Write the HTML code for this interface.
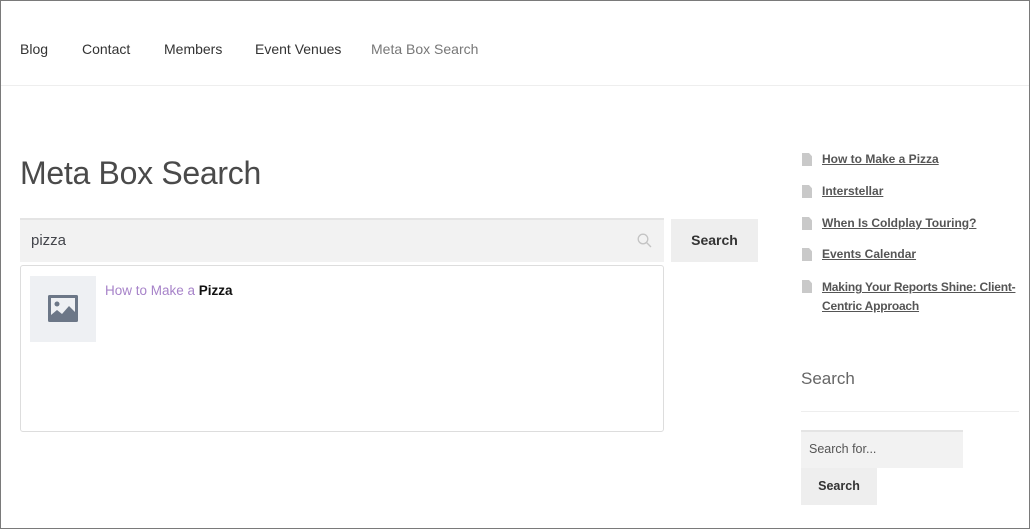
<!DOCTYPE html>
<html><head><meta charset="utf-8"><style>
*{margin:0;padding:0;box-sizing:border-box}
body{width:1030px;height:529px;overflow:hidden;background:#fff;font-family:"Liberation Sans",sans-serif;color:#43454b;position:relative}
.frame{position:absolute;left:0;top:0;width:1030px;height:529px;border:1px solid #7a7a7a;pointer-events:none}
.nav{position:absolute;top:41px;left:20px;font-size:14px;color:#333}
.nav span{position:absolute;white-space:nowrap}
.hr{position:absolute;left:1px;right:1px;top:85px;height:1px;background:#eee}
h1{position:absolute;left:20px;top:155px;font-weight:normal;font-size:32px;color:#4a4a4a;letter-spacing:-0.3px;white-space:nowrap}
.input{position:absolute;left:20px;top:218px;width:644px;height:44px;background:#f2f2f2;border-top:2px solid #e4e4e4}
.input .t{position:absolute;left:11px;top:12px;font-size:15px;color:#43454b}
.btn{position:absolute;background:#eeeeee;font-weight:bold;color:#333;text-align:center}
.res{position:absolute;left:20px;top:265px;width:644px;height:167px;border:1px solid #ddd;border-radius:3px}
.thumb{position:absolute;left:9px;top:10px;width:66px;height:66px;background:#eef0f3}
.res .l{position:absolute;left:84px;top:17px;font-size:13.5px;color:#a783c9;white-space:nowrap}
.res .l b{color:#111}
.side{position:absolute;left:802px;font-size:12px;font-weight:bold;color:#555;white-space:nowrap}
.side i{position:absolute;left:0;top:1px;width:10px;height:13px;background:#c9c9c9;clip-path:polygon(0 0,70% 0,100% 25%,100% 100%,0 100%)}
.side a{position:absolute;left:20px;color:#555;text-decoration:underline}
</style></head><body>
<div class="nav">
<span style="left:0">Blog</span><span style="left:62px">Contact</span><span style="left:144px">Members</span><span style="left:235px">Event Venues</span><span style="left:351px;color:#777">Meta Box Search</span>
</div>
<div class="hr"></div>
<h1>Meta Box Search</h1>
<div class="input"><span class="t">pizza</span>
<svg style="position:absolute;left:617px;top:13px" width="15" height="15" viewBox="0 0 15 15"><circle cx="6" cy="6" r="4.8" fill="none" stroke="#c4c4c4" stroke-width="1.3"/><path d="M9.5 9.5L14 14" stroke="#c4c4c4" stroke-width="1.3"/></svg></div>
<div class="btn" style="left:671px;top:219px;width:87px;height:43px;line-height:43px;font-size:14px">Search</div>
<div class="res"><div class="thumb"><svg style="position:absolute;left:18px;top:19px" width="30" height="28" viewBox="0 0 30 28"><rect x="0" y="0" width="30" height="27" rx="1.5" fill="#6c7787"/><rect x="3" y="3" width="24" height="21" fill="#eef0f3"/><circle cx="9" cy="9" r="2.5" fill="#6c7787"/><path d="M3 24L3 20 9 15 14 19 21 11 27 17 27 24Z" fill="#6c7787"/></svg></div>
<div class="l">How to Make a <b>Pizza</b></div></div>
<div class="side" style="top:152px"><i></i><a>How to Make a Pizza</a></div>
<div class="side" style="top:184px"><i></i><a>Interstellar</a></div>
<div class="side" style="top:216px"><i></i><a>When Is Coldplay Touring?</a></div>
<div class="side" style="top:247px"><i></i><a>Events Calendar</a></div>
<div class="side" style="top:279px"><i></i><a style="line-height:19px;top:-1px;letter-spacing:-0.2px">Making Your Reports Shine: Client-<br>Centric Approach</a></div>
<div style="position:absolute;left:801px;top:369px;font-size:17px;color:#666">Search</div>
<div style="position:absolute;left:801px;top:411px;width:218px;height:1px;background:#eee"></div>
<div style="position:absolute;left:801px;top:430px;width:162px;height:38px;background:#f2f2f2;border-top:2px solid #e4e4e4;font-size:12.5px;color:#555;padding:10px 0 0 8px">Search for...</div>
<div class="btn" style="left:801px;top:468px;width:76px;height:37px;line-height:37px;font-size:12.5px">Search</div>
<div class="frame"></div>
</body></html>
